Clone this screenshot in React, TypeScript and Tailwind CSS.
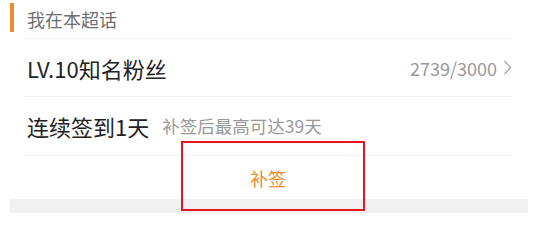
export default function App() {
  return (
    <div
      className="relative w-[550px] h-[213px] overflow-hidden bg-white"
      style={{ fontFamily: '"Noto Sans CJK SC", "Noto Sans", sans-serif' }}
    >
      {/* section title */}
      <div className="flex h-[38px] items-center">
        <div className="ml-[10px] h-[29px] w-[4px] self-start mt-[3px] bg-[#f08a2c]" />
        <span className="ml-[13px] text-[18px] leading-none text-[#6f6f6f]">我在本超话</span>
      </div>
      <div className="ml-[24px] h-px w-[488px] bg-[#f2f2f2]" />

      {/* level */}
      <div className="ml-[24px] flex h-[57px] w-[488px] items-center pl-[3px]">
        <span className="text-[22px] leading-none text-[#222]">LV.10知名粉丝</span>
        <span className="ml-auto text-[18px] leading-none text-[#999]">2739/3000</span>
        <svg width="9" height="15" viewBox="0 0 9 15" className="ml-[6px]" fill="none">
          <path d="M1.5 1 L7.5 7.5 L1.5 14" stroke="#aaa" strokeWidth="1.3" />
        </svg>
      </div>
      <div className="ml-[24px] h-px w-[488px] bg-[#f2f2f2]" />

      {/* streak */}
      <div className="ml-[24px] flex h-[58px] w-[488px] items-center pl-[3px]">
        <span className="text-[22px] leading-none text-[#222]">连续签到1天</span>
        <span className="ml-[13px] text-[17.5px] leading-none text-[#999]">补签后最高可达39天</span>
      </div>
      <div className="ml-[24px] h-px w-[488px] bg-[#f2f2f2]" />

      {/* action */}
      <div className="flex h-[43px] w-[536px] items-center justify-center">
        <span className="text-[18px] leading-none text-[#f08a2c]">补签</span>
      </div>
      <div className="ml-[10px] h-[14px] w-[518px] bg-[#f0f0f0]" />

      {/* highlight box */}
      <div className="absolute left-[181px] top-[141px] h-[70px] w-[184px] border-2 border-[#e8141f]" />
    </div>
  );
}
